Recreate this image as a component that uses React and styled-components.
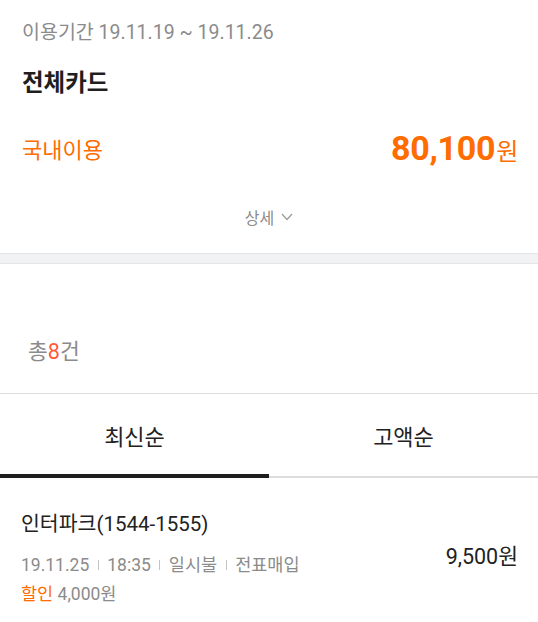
import React, {useState} from 'react'
import styled, {createGlobalStyle} from 'styled-components'

const GlobalStyle = createGlobalStyle`
    html, body {
        margin: 0;
        padding: 0;
        background: #fff;
    }
    body {
        font-family: Roboto, "Noto Sans CJK KR", sans-serif;
        -webkit-font-smoothing: antialiased;
    }
    * {
        box-sizing: border-box;
    }
`

const tabs = ['최신순', '고액순']

function App(){
    const [active, setActive] = useState(0)
    return (
        <Page>
            <GlobalStyle />
            <Summary>
                <Period>이용기간 19.11.19 ~ 19.11.26</Period>
                <Title>전체카드</Title>
                <TotalRow>
                    <TotalLabel>국내이용</TotalLabel>
                    <TotalAmount>80,100<small>원</small></TotalAmount>
                </TotalRow>
                <DetailButton>
                    상세
                    <svg width="12" height="8" viewBox="0 0 12 8" fill="none">
                        <path d="M1 1l5 5.5L11 1" stroke="#999" strokeWidth="1.2" />
                    </svg>
                </DetailButton>
            </Summary>
            <Divider />
            <CountBox>
                <Count>총<em>8</em>건</Count>
            </CountBox>
            <TabList>
                {tabs.map((t, i) => (
                    <Tab key={t} active={i === active} onClick={() => setActive(i)}>{t}</Tab>
                ))}
            </TabList>
            <Item>
                <ItemInfo>
                    <ItemName>인터파크(1544-1555)</ItemName>
                    <Meta>
                        <span>19.11.25</span>
                        <Sep />
                        <span>18:35</span>
                        <Sep />
                        <span>일시불</span>
                        <Sep />
                        <span>전표매입</span>
                    </Meta>
                    <Discount><b>할인</b> 4,000원</Discount>
                </ItemInfo>
                <ItemAmount>9,500원</ItemAmount>
            </Item>
        </Page>
    )
}

export default App;

const Page = styled.div`
    width: 538px;
    min-height: 622px;
    background: #fff;
`

const Summary = styled.div`
    padding: 21px 22px 0;
`

const Period = styled.div`
    font-size: 19.5px;
    line-height: 24px;
    color: #8b8b8b;
`

const Title = styled.div`
    margin-top: 22px;
    font-size: 23.5px;
    line-height: 32px;
    font-weight: 700;
    color: #1f1f1f;
`

const TotalRow = styled.div`
    margin-top: 31px;
    display: flex;
    align-items: center;
    justify-content: space-between;
    height: 36px;
`

const TotalLabel = styled.span`
    font-size: 22px;
    color: #ff6c00;
`

const TotalAmount = styled.span`
    font-size: 34px;
    font-weight: 700;
    color: #ff6c00;
    letter-spacing: -0.3px;
    margin-right: -2px;

    small {
        font-size: 24px;
        font-weight: 400;
        margin-left: 1px;
    }
`

const DetailButton = styled.div`
    display: flex;
    align-items: center;
    justify-content: center;
    gap: 7px;
    margin-top: 15px;
    height: 72px;
    font-size: 16px;
    color: #8b8b8b;
`

const Divider = styled.div`
    height: 11px;
    background: #f1f2f4;
    border-top: 1px solid #e4e5e7;
    border-bottom: 1px solid #e4e5e7;
`

const CountBox = styled.div`
    height: 130px;
    display: flex;
    align-items: center;
    padding: 42px 28px 0;
    border-bottom: 1px solid #dcdcdc;
`

const Count = styled.div`
    font-size: 21.5px;
    color: #8b8b8b;

    em {
        font-style: normal;
        color: #ff5b3a;
    }
`

const TabList = styled.div`
    display: flex;
    height: 84px;
    border-bottom: 2px solid #dcdcdc;
`

const Tab = styled.div`
    flex: 1;
    display: flex;
    align-items: center;
    justify-content: center;
    font-size: 22px;
    color: #222;
    margin-bottom: -2px;
    border-bottom: 4px solid ${p => p.active ? '#1e1e1e' : 'transparent'};
    padding-top: 2px;
    cursor: pointer;
`

const Item = styled.div`
    display: flex;
    align-items: center;
    justify-content: space-between;
    padding: 32px 20px 0 21px;
`

const ItemInfo = styled.div`
    display: flex;
    flex-direction: column;
`

const ItemName = styled.div`
    font-size: 20.5px;
    line-height: 28px;
    color: #222;
`

const Meta = styled.div`
    margin-top: 15px;
    display: flex;
    align-items: center;
    font-size: 17.5px;
    line-height: 24px;
    color: #8b8b8b;
`

const Sep = styled.i`
    display: inline-block;
    width: 1px;
    height: 10px;
    background: #c4c4c4;
    margin: 0 8.5px;
`

const Discount = styled.div`
    margin-top: 5px;
    font-size: 17.5px;
    line-height: 24px;
    color: #8b8b8b;

    b {
        font-weight: 400;
        color: #ff6c00;
    }
`

const ItemAmount = styled.div`
    font-size: 21.5px;
    color: #222;
    margin-bottom: 8px;
`
